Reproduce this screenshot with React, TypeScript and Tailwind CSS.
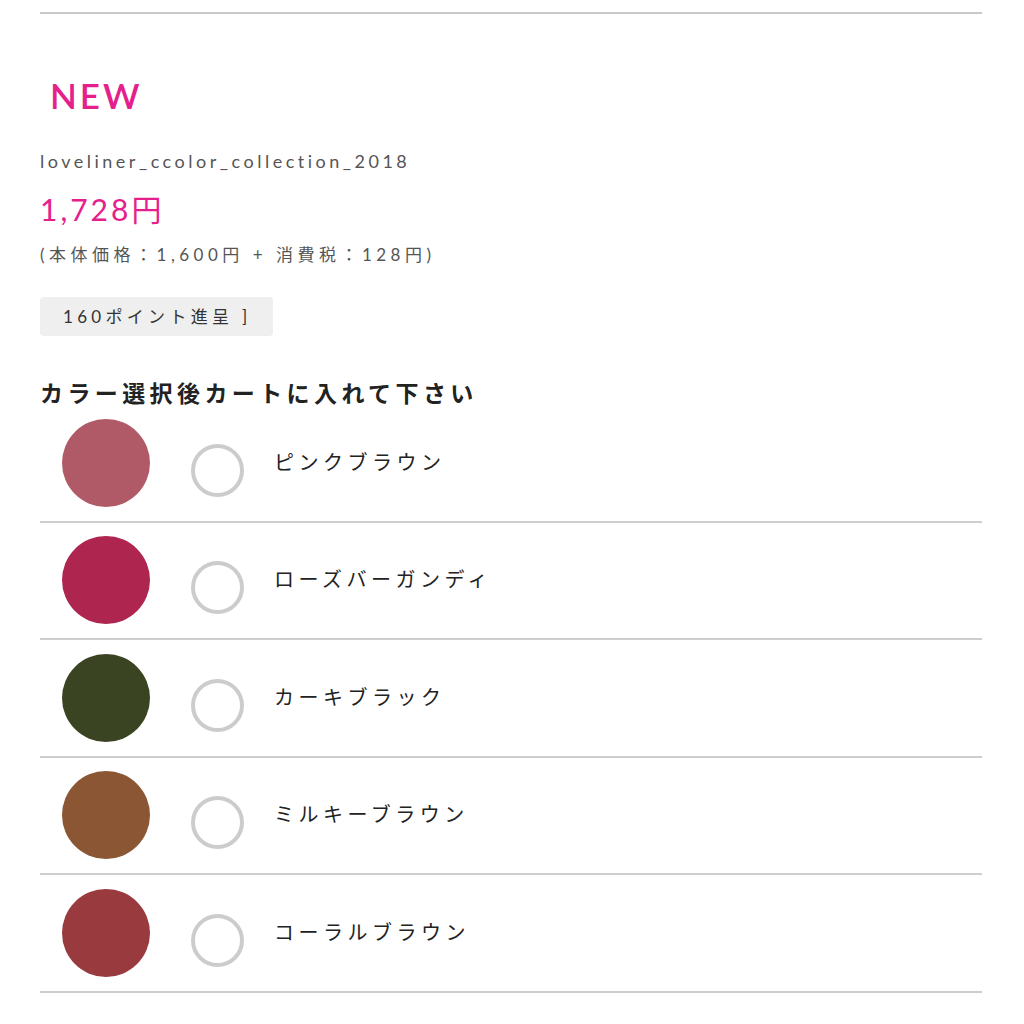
import React from "react";

const colors = [
  { name: "ピンクブラウン", hex: "#b15a67" },
  { name: "ローズバーガンディ", hex: "#ae2550" },
  { name: "カーキブラック", hex: "#3a4422" },
  { name: "ミルキーブラウン", hex: "#8a5633" },
  { name: "コーラルブラウン", hex: "#993a3f" },
];

export default function App() {
  return (
    <div
      className="w-[1024px] h-[1024px] bg-white px-[40px] pt-[12px] overflow-hidden"
      style={{ fontFamily: 'Lato, "Noto Sans CJK JP", sans-serif' }}
    >
      <div className="h-[2px] w-[942px] bg-[#c9c9c9]" />
      <div className="mt-[61px] pl-[10px] text-[35px] leading-[40px] font-semibold text-[#e5208c] tracking-[3px]">
        NEW
      </div>
      <div className="mt-[35px] text-[18px] leading-[22px] text-[#555] tracking-[3.5px]">
        loveliner_ccolor_collection_2018
      </div>
      <div className="mt-[20px] text-[30px] leading-[35px] text-[#e5208c] tracking-[3px]">
        1,728円
      </div>
      <div className="mt-[17px] text-[17px] leading-[22px] text-[#555] tracking-[4.5px]">
        (本体価格：1,600円 + 消費税：128円)
      </div>
      <div className="mt-[31px] inline-flex h-[39px] w-[233px] items-center rounded-[4px] bg-[#efefef] pl-[23px] text-[17px] text-[#333] tracking-[4.3px]">
        160ポイント進呈 ]
      </div>
      <div className="mt-[44px] text-[23px] leading-[26px] font-bold text-[#222] tracking-[4.4px]">
        カラー選択後カートに入れて下さい
      </div>
      <div className="mt-[-1px] w-[942px]">
        {colors.map((c) => (
          <div
            key={c.name}
            className="flex h-[117.5px] items-center border-b-2 border-[#cdcdcd] pl-[22px]"
          >
            <div
              className="h-[88px] w-[88px] shrink-0 rounded-full"
              style={{ backgroundColor: c.hex }}
            />
            <div className="ml-[41px] mt-[15px] h-[53px] w-[53px] shrink-0 rounded-full border-[4px] border-[#cccccc] bg-white" />
            <div className="ml-[30px] mb-[2px] text-[20px] text-[#222] tracking-[4.5px]">
              {c.name}
            </div>
          </div>
        ))}
      </div>
    </div>
  );
}
